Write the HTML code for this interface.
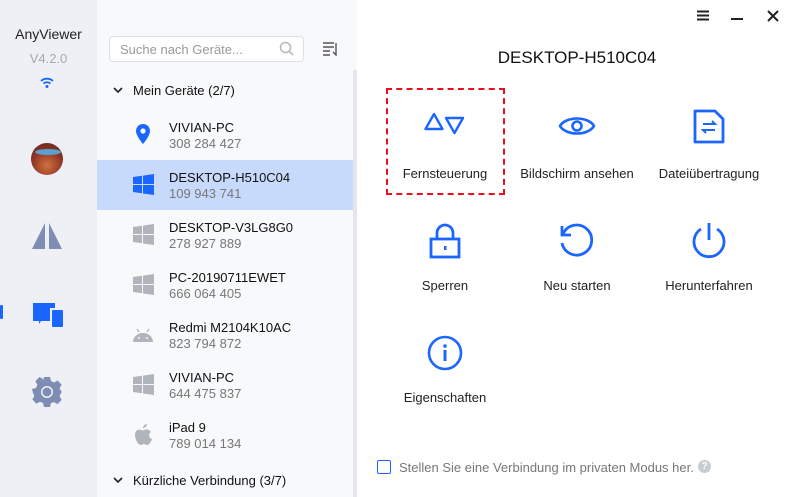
<!DOCTYPE html>
<html><head><meta charset="utf-8"><style>
*{margin:0;padding:0;box-sizing:border-box}
body{width:797px;height:497px;overflow:hidden;font-family:"Liberation Sans",Arial,sans-serif;background:#fff;position:relative}
.side{position:absolute;left:0;top:0;width:97px;height:497px;background:#eef0f5}
.list{position:absolute;left:97px;top:0;width:260px;height:497px;background:#f8f9fb}
.main{position:absolute;left:357px;top:0;width:440px;height:497px;background:#fff}
.abs{position:absolute}
.row{position:absolute;left:0;width:256px;height:50px}
.row .n{position:absolute;left:72px;top:10px;font-size:13px;color:#111}
.row .i{position:absolute;left:72px;top:26px;font-size:13px;color:#777}
.row svg{position:absolute;left:36px;top:14px}
.act{position:absolute;width:130px;text-align:center;font-size:13px;color:#222}
.act svg{display:block;margin:0 auto}
</style></head><body>
<div class="side">
 <div class="abs" style="left:0;width:97px;top:26px;text-align:center;font-size:14px;color:#222">AnyViewer</div>
 <div class="abs" style="left:0;width:97px;top:51px;text-align:center;font-size:13px;color:#aaa">V4.2.0</div>
 <svg class="abs" style="left:39px;top:77px" width="16" height="12" viewBox="0 0 16 12"><path d="M2 4a9 9 0 0 1 12 0M4.5 6.5a5.5 5.5 0 0 1 7 0" stroke="#1a66ff" stroke-width="1.8" fill="none"/><circle cx="8" cy="9.5" r="1.5" fill="#1a66ff"/></svg>
 <div class="abs" style="left:31px;top:143px;width:32px;height:32px;border-radius:50%;background:radial-gradient(circle at 50% 70%,#d07040,#8a3020 60%,#5a2a20);overflow:hidden"><div style="position:absolute;left:4px;top:6px;width:26px;height:6px;background:#5aa0d0;border-radius:50%"></div></div>
 <svg class="abs" style="left:31px;top:222px" width="32" height="28" viewBox="0 0 32 28"><path d="M14 1L1 27h13z M18 1l13 26H18z" fill="#7d8db3"/></svg>
 <div class="abs" style="left:0;top:305px;width:3px;height:14px;background:#1a66ff;border-radius:1px"></div>
 <svg class="abs" style="left:33px;top:303px" width="30" height="24" viewBox="0 0 30 24"><path d="M0 0h22v5h-5v13H8l-2 3v-3H0z" fill="#1a66ff"/><rect x="19" y="7" width="11" height="17" rx="1" fill="#1a66ff"/></svg>
 <svg class="abs" style="left:31px;top:376px" width="32" height="32" viewBox="0 0 32 32"><path d="M13 1h6l1 4 3 1.5 3.6-2 4 4.2-2 3.6L30 15v0l1 1v0l0 0-1 1-1.4 3.3 2 3.6-4 4.2-3.6-2L20 27l-1 4h-6l-1-4-3-1.3-3.6 2-4-4.2 2-3.6L2 17l-1-4 4-1 1.4-3.2-2-3.6 4-4.2 3.6 2L12 5z" fill="#7d8db3"/><circle cx="16" cy="16" r="6" fill="#eef0f5"/><circle cx="16" cy="16" r="4.5" fill="#7d8db3"/></svg>
</div>
<div class="list">
 <div class="abs" style="left:12px;top:36px;width:195px;height:26px;border:1px solid #dcdfe6;border-radius:4px;background:#fff;font-size:13px;color:#999;padding:5px 0 0 10px">Suche nach Geräte...</div>
 <svg class="abs" style="left:182px;top:41px" width="15" height="15" viewBox="0 0 15 15"><circle cx="6.5" cy="6.5" r="5" stroke="#bbb" stroke-width="1.6" fill="none"/><path d="M10 10l4 4" stroke="#bbb" stroke-width="1.6"/></svg>
 <svg class="abs" style="left:226px;top:42px" width="15" height="14" viewBox="0 0 15 14"><path d="M0 1h11M0 5h11M0 9h7M0 13h7M13 1v12l-3-3" stroke="#555" stroke-width="1.4" fill="none"/></svg>
 <div class="abs" style="left:256px;top:70px;width:4px;height:427px;background:#e4e6ec"></div>
 <svg class="abs" style="left:16px;top:86px" width="10" height="8"><path d="M1 2l4 4 4-4" stroke="#222" stroke-width="1.6" fill="none"/></svg>
 <div class="abs" style="left:36px;top:83px;font-size:13px;color:#111">Mein Geräte (2/7)</div>
 <div class="row" style="top:110px"><svg width="20" height="22" viewBox="0 0 20 22" style="left:39px"><path d="M7 0a7 7 0 0 1 7 7c0 5-7 13-7 13S0 12 0 7a7 7 0 0 1 7-7z" fill="#1a66ff"/><circle cx="7" cy="7" r="2.6" fill="#f8f9fb"/></svg><div class="n">VIVIAN-PC</div><div class="i">308 284 427</div></div>
 <div class="row" style="top:160px;background:#c8dafc;width:256px"><svg width="21" height="21" viewBox="0 0 21 21"><path d="M0 3l9-1.2V10H0zM10 1.6L21 0v10H10zM0 11h9v8.2L0 18zM10 11h11v10l-11-1.5z" fill="#1a66ff"/></svg><div class="n">DESKTOP-H510C04</div><div class="i">109 943 741</div></div>
 <div class="row" style="top:210px"><svg width="21" height="21" viewBox="0 0 21 21"><path d="M0 3l9-1.2V10H0zM10 1.6L21 0v10H10zM0 11h9v8.2L0 18zM10 11h11v10l-11-1.5z" fill="#b0b4bb"/></svg><div class="n">DESKTOP-V3LG8G0</div><div class="i">278 927 889</div></div>
 <div class="row" style="top:260px"><svg width="21" height="21" viewBox="0 0 21 21"><path d="M0 3l9-1.2V10H0zM10 1.6L21 0v10H10zM0 11h9v8.2L0 18zM10 11h11v10l-11-1.5z" fill="#b0b4bb"/></svg><div class="n">PC-20190711EWET</div><div class="i">666 064 405</div></div>
 <div class="row" style="top:310px"><svg width="22" height="22" viewBox="0 0 22 22" style="left:35px;top:14px"><path d="M5 5l2 3M17 5l-2 3" stroke="#b0b4bb" stroke-width="1.3"/><path d="M1 18a10 9 0 0 1 20 0z" fill="#b0b4bb"/><circle cx="7" cy="14" r="1" fill="#f8f9fb"/><circle cx="15" cy="14" r="1" fill="#f8f9fb"/></svg><div class="n">Redmi M2104K10AC</div><div class="i">823 794 872</div></div>
 <div class="row" style="top:360px"><svg width="21" height="21" viewBox="0 0 21 21"><path d="M0 3l9-1.2V10H0zM10 1.6L21 0v10H10zM0 11h9v8.2L0 18zM10 11h11v10l-11-1.5z" fill="#b0b4bb"/></svg><div class="n">VIVIAN-PC</div><div class="i">644 475 837</div></div>
 <div class="row" style="top:410px"><svg width="20" height="22" viewBox="0 0 20 22" style="left:37px;top:13px"><path d="M13 1c0 2-2 4-4 4 0-2 2-4 4-4zM10 7c2-1 5-1 7 2-3 2-2 6 1 7-1 3-3 6-5 6-1 0-2-1-3-1s-2 1-3 1c-3 0-6-6-6-10 0-5 4-6 6-5 1 0 2 1 3 0z" fill="#b0b4bb"/></svg><div class="n">iPad 9</div><div class="i">789 014 134</div></div>
 <svg class="abs" style="left:16px;top:476px" width="10" height="8"><path d="M1 2l4 4 4-4" stroke="#222" stroke-width="1.6" fill="none"/></svg>
 <div class="abs" style="left:36px;top:473px;font-size:13px;color:#111">Kürzliche Verbindung (3/7)</div>
</div>
<div class="main">
 <svg class="abs" style="left:340px;top:10px" width="12" height="11"><path d="M0 1.5h12M0 5.5h12M0 9.5h12" stroke="#222" stroke-width="2"/></svg>
 <div class="abs" style="left:374px;top:18px;width:12px;height:2px;background:#222"></div>
 <svg class="abs" style="left:410px;top:10px" width="12" height="12"><path d="M1 1l10 10M11 1L1 11" stroke="#222" stroke-width="2"/></svg>
 <div class="abs" style="left:0;width:440px;top:48px;text-align:center;font-size:17px;color:#111">DESKTOP-H510C04</div>
 <div class="abs" style="left:29px;top:88px;width:119px;height:107px;border:2.5px dashed #e8101c"></div>
 <div class="act" style="left:23px;top:112px"><svg width="42" height="26" viewBox="0 0 42 26"><path d="M10 2L1.5 17h17z" stroke="#1a66ff" stroke-width="2.4" fill="none" stroke-linejoin="round"/><path d="M22 6h17l-8.5 15z" stroke="#1a66ff" stroke-width="2.4" fill="none" stroke-linejoin="round"/></svg><div style="margin-top:28px">Fernsteuerung</div></div>
 <div class="act" style="left:155px;top:113px"><svg width="38" height="26" viewBox="0 0 38 26"><path d="M2 13C8 3 30 3 36 13 30 23 8 23 2 13z" stroke="#1a66ff" stroke-width="2.6" fill="none"/><circle cx="19" cy="13" r="4.5" stroke="#1a66ff" stroke-width="2.6" fill="none"/></svg><div style="margin-top:27px">Bildschirm ansehen</div></div>
 <div class="act" style="left:287px;top:109px"><svg width="32" height="35" viewBox="0 0 32 35"><path d="M2 2h20l8 8v23H2z" stroke="#1a66ff" stroke-width="2.8" fill="none" stroke-linejoin="round"/><path d="M10 15h12l-3-3M22 21H10l3 3" stroke="#1a66ff" stroke-width="2" fill="none"/></svg><div style="margin-top:22px">Dateiübertragung</div></div>
 <div class="act" style="left:23px;top:223px"><svg width="32" height="36" viewBox="0 0 32 36"><path d="M8 16V10a8 8 0 0 1 16 0v6" stroke="#1a66ff" stroke-width="2.8" fill="none"/><rect x="2" y="16" width="28" height="18" stroke="#1a66ff" stroke-width="2.8" fill="none"/><rect x="15" y="23" width="2.5" height="4" fill="#1a66ff"/></svg><div style="margin-top:19px">Sperren</div></div>
 <div class="act" style="left:155px;top:223px"><svg width="36" height="36" viewBox="0 0 36 36"><path d="M4 11A15 15 0 1 1 3 20" stroke="#1a66ff" stroke-width="2.8" fill="none"/><path d="M3 3v9h9" stroke="#1a66ff" stroke-width="2.8" fill="none"/></svg><div style="margin-top:19px">Neu starten</div></div>
 <div class="act" style="left:287px;top:222px"><svg width="36" height="37" viewBox="0 0 36 37"><path d="M10 7a15 15 0 1 0 16 0" stroke="#1a66ff" stroke-width="2.8" fill="none"/><path d="M18 1v17" stroke="#1a66ff" stroke-width="2.8"/></svg><div style="margin-top:19px">Herunterfahren</div></div>
 <div class="act" style="left:23px;top:335px"><svg width="36" height="36" viewBox="0 0 36 36"><circle cx="18" cy="18" r="16" stroke="#1a66ff" stroke-width="2.6" fill="none"/><circle cx="18" cy="11" r="1.8" fill="#1a66ff"/><path d="M18 15v11" stroke="#1a66ff" stroke-width="3"/></svg><div style="margin-top:19px">Eigenschaften</div></div>
 <div class="abs" style="left:20px;top:460px;width:14px;height:14px;border:1.3px solid #1a66ff;border-radius:2px"></div>
 <div class="abs" style="left:42px;top:460px;font-size:13px;color:#777">Stellen Sie eine Verbindung im privaten Modus her.</div>
 <div class="abs" style="left:341px;top:460px;width:13px;height:13px;border-radius:50%;background:#c8ccd4;color:#fff;font-size:10px;font-weight:bold;text-align:center;line-height:13px">?</div>
</div>
</body></html>
